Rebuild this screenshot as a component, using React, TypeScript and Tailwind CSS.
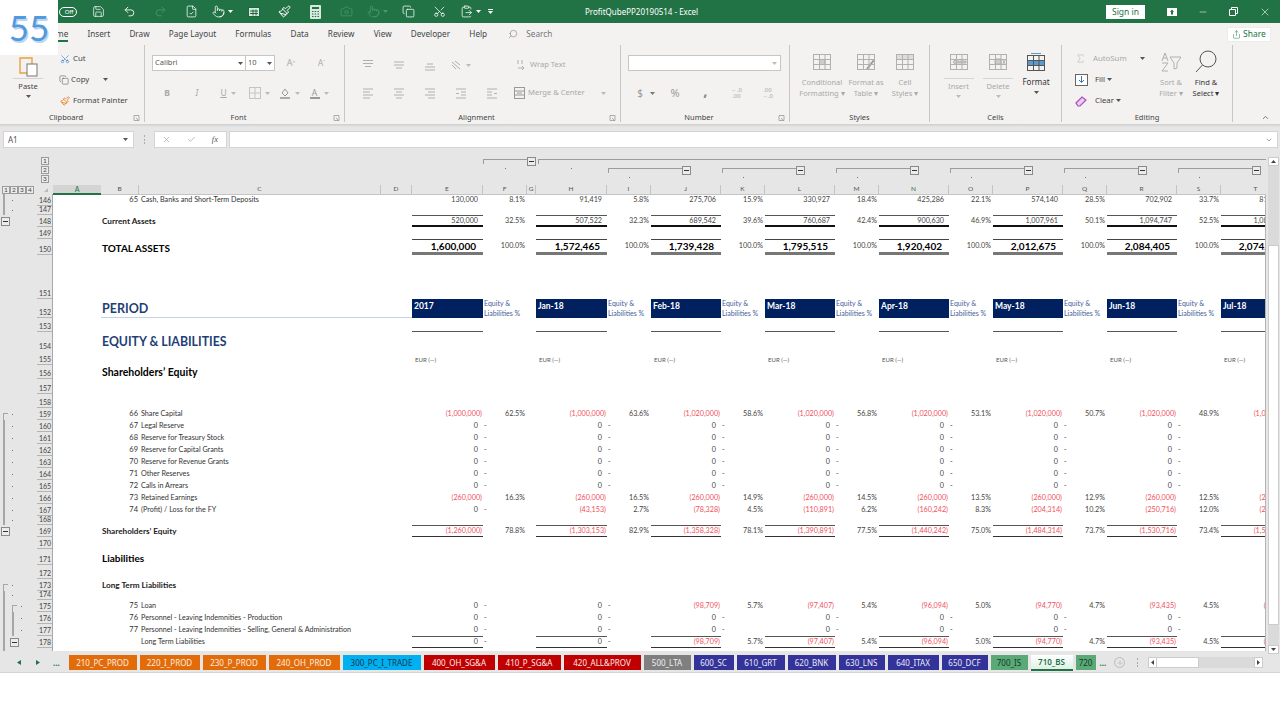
import React from 'react';
import { Save, Undo2, Redo2, Scissors, Camera, Pointer, Paintbrush, Copy, ClipboardPaste, FileCheck, Minus, X, Check, ChevronDown, ChevronUp, Plus, Search, Sigma, Share } from 'lucide-react';

const sheetCols = 'grid w-[1335px] grid-cols-[53px_48px_38px_242px_31px_71px_44px_9px_71px_44px_70px_44px_70px_44px_70px_44px_70px_44px_70px_44px_70px_44px]';

const off = '#b0b0b0';

const Caret = ({ c = '#555', className = '' }: { c?: string; className?: string }) => (
  <svg width="5" height="3" viewBox="0 0 5 3" className={className}><path d="M0 0h5L2.5 3z" fill={c} /></svg>
);

const Grid = ({ c = off, fill }: { c?: string; fill?: React.ReactNode }) => (
  <svg width="18" height="16" viewBox="0 0 18 16" fill="none" stroke={c} strokeWidth="1">
    {fill}
    <rect x=".5" y=".5" width="17" height="15" />
    <path d="M.5 5.5h17M.5 10.5h17M6.5.5v15M12 .5v15" />
  </svg>
);

const Lines = ({ d }: { d: string }) => (
  <svg width="12" height="12" viewBox="0 0 12 12" fill="none" stroke={off} strokeWidth="1"><path d={d} /></svg>
);

const Boxed = ({ t }: { t: string }) => (
  <div className="w-[8px] h-[8px] border border-[#9a9a9a] bg-[#ececec] flex items-center justify-center text-[6.5px] leading-none text-[#444]">{t}</div>
);

const MinusBox = () => (
  <div className="w-[9px] h-[9px] shrink-0 border border-[#8a8a8a] bg-[#ececec] flex items-center justify-center">
    <div className="w-[5px] h-[1px] bg-[#333]" />
  </div>
);

function Group({ w, label, launcher = true, children }: { w: string; label: string; launcher?: boolean; children: React.ReactNode }) {
  return (
    <div className={`${w} h-[79px] shrink-0 flex`}>
      <div className="flex-1 min-w-0 flex flex-col">
        <div className="flex-1 min-h-0">{children}</div>
        <div className="h-[12px] flex items-center">
          <div className="flex-1 text-center text-[7.5px] leading-none text-[#444]">{label}</div>
          {launcher && (
            <svg width="12" height="7" viewBox="0 0 12 7" fill="none" stroke="#999" strokeWidth=".8"><path d="M2 .5h5v5M2 .5v5h5M4 3l3 3" /></svg>
          )}
        </div>
      </div>
      <div className="w-[1px] h-[77px] bg-[#c8c6c4]" />
    </div>
  );
}

function BigBtn({ w, icon, lines, dark, rule }: { w: string; icon: React.ReactNode; lines: string[]; dark?: boolean; rule?: boolean }) {
  const color = dark ? 'text-[#333]' : 'text-[#a8a8a8]';
  return (
    <div className={`${w} flex flex-col items-center`}>
      <div className="h-[30px] flex items-center justify-center">{icon}</div>
      {rule ? (
        <>
          <div className="w-[30px] h-[1px] mt-[1px] bg-[#d4d4d4]" />
          <div className={`text-[7.5px] leading-[14px] ${color}`}>{lines[0]}</div>
          <Caret c={dark ? '#555' : '#bbb'} className="mt-[2px]" />
        </>
      ) : (
        lines.map((l) => (
          <div key={l} className={`text-[7.5px] leading-[10.5px] whitespace-nowrap ${color}`}>{l}</div>
        ))
      )}
    </div>
  );
}

const Cell = ({ w, children }: { w: string; children?: React.ReactNode }) => (
  <div className={`${w} shrink-0 flex items-center justify-center gap-[4px]`}>{children}</div>
);

function TitleBar() {
  const dim = '#4d9a70';
  const ic = 'w-[31px] flex items-center justify-center shrink-0';
  return (
    <div className="h-[23px] bg-[#217346] flex items-center text-white">
      <div className="w-[585px] shrink-0 flex items-center pl-[52px]">
        <div className={ic}>
          <div className="w-[18px] h-[10px] rounded-full border border-white text-[6px] leading-[8px] text-right pr-[2px]">Off</div>
        </div>
        <div className={ic}><Save size={13} strokeWidth={1.3} /></div>
        <div className={ic}><Undo2 size={13} strokeWidth={1.6} /></div>
        <div className={ic}><Redo2 size={13} strokeWidth={1.4} color={dim} /></div>
        <div className={ic}><FileCheck size={13} strokeWidth={1.4} /></div>
        <div className={ic}><Pointer size={13} strokeWidth={1.4} /><Caret c="#fff" className="ml-[3px]" /></div>
        <div className={ic}>
          <svg width="12" height="12" viewBox="0 0 12 12" fill="#d9e9df" stroke="#1d6a40"><rect x=".5" y="1.5" width="11" height="9" /><path d="M2 5h8M2 7.5h8M5 3.5v6M8 3.5v6" /></svg>
        </div>
        <div className={ic}><Paintbrush size={13} strokeWidth={1.8} /></div>
        <div className={ic}>
          <svg width="11" height="14" viewBox="0 0 11 14"><rect width="11" height="14" rx="1" fill="#d9e9df" /><path d="M2 2h7v2H2zM2 6h1.500v1H2zM4.700 6h1.500v1H4.700zM7.500 6H9v1H7.500zM2 8.500h1.500v1H2zM4.700 8.500h1.500v1H4.700zM7.500 8.500H9v1H7.500zM2 11h1.500v1H2zM4.700 11h1.500v1H4.700zM7.500 11H9v1H7.500z" fill="#217346" /></svg>
        </div>
        <div className={ic}><Camera size={13} strokeWidth={1.3} color={dim} /></div>
        <div className={ic}><Pointer size={13} strokeWidth={1.4} color={dim} /><Caret c={dim} className="ml-[3px]" /></div>
        <div className={ic}><Copy size={13} strokeWidth={1.4} /></div>
        <div className={ic}><Scissors size={13} strokeWidth={1.4} className="rotate-[-90deg]" /></div>
        <div className={ic}><ClipboardPaste size={13} strokeWidth={1.4} /><Caret c="#fff" className="ml-[3px]" /></div>
        <div className="flex flex-col items-center gap-[1px] ml-[2px]"><div className="w-[5px] h-[1px] bg-white" /><Caret c="#fff" /></div>
      </div>
      <div className="text-[8px] leading-none whitespace-nowrap">ProfitQubePP20190514  -  Excel</div>
      <div className="ml-auto flex items-center">
        <div className="w-[39px] h-[14px] bg-white text-[#217346] text-[8.5px] leading-[14px] text-center mr-[11px]">Sign in</div>
        <div className="w-[31px] flex justify-center">
          <svg width="10" height="8" viewBox="0 0 10 8"><rect width="10" height="8" fill="#fff" /><path d="M5 1.500L7 4H6v2.500H4V4H3z" fill="#217346" /></svg>
        </div>
        <div className="w-[31px] flex justify-center"><Minus size={10} strokeWidth={1.3} /></div>
        <div className="w-[31px] flex justify-center">
          <svg width="9" height="9" viewBox="0 0 9 9" fill="none" stroke="#fff"><path d="M2.500 2.500V.5h6v6h-2M.5 2.500h6v6h-6z" /></svg>
        </div>
        <div className="w-[31px] flex justify-center"><X size={12} strokeWidth={1.2} /></div>
      </div>
    </div>
  );
}

function TabStrip() {
  const tabs = ['Insert', 'Draw', 'Page Layout', 'Formulas', 'Data', 'Review', 'View', 'Developer', 'Help'];
  return (
    <div className="h-[22px] bg-[#f3f2f1] flex items-center text-[8.2px] text-[#444] pl-[45px] gap-[19.2px]">
      <div className="relative leading-[22px]">
        Home
        <div className="absolute left-0 right-0 bottom-[3px] h-[2px] bg-[#217346]" />
      </div>
      {tabs.map((t) => <div key={t} className="whitespace-nowrap">{t}</div>)}
      <div className="flex items-center gap-[8px] ml-[2px] text-[#777]">
        <Search size={10} strokeWidth={1.3} className="scale-x-[-1]" />
        <span>Search</span>
      </div>
      <div className="ml-auto mr-[9px] w-[44px] h-[15px] bg-white flex items-center justify-center gap-[2px] text-[#217346] border border-[#ececec] text-[8.5px]">
        <Share size={9} strokeWidth={1.3} />
        <span>Share</span>
      </div>
    </div>
  );
}

function Ribbon() {
  return (
    <div className="h-[79px] bg-[#f3f2f1] flex text-[#444] text-[7.8px]">
      <Group w="w-[145px]" label="Clipboard">
        <div className="flex">
          <div className="w-[56px] pl-[11px] pt-[2px]">
            <div className="w-[34px] flex flex-col items-center">
              <div className="h-[30px] flex items-end">
                <svg width="20" height="22" viewBox="0 0 20 22" fill="none">
                  <path d="M2 3h12v15H2z" fill="#f3f2f1" stroke="#e8a33d" strokeWidth="1.4" />
                  <rect x="9" y="9" width="10" height="12" fill="#fff" stroke="#777" />
                </svg>
              </div>
              <div className="w-[30px] h-[1px] mt-[1px] bg-[#d4d4d4]" />
              <div className="text-[7.5px] leading-[14px]">Paste</div>
              <Caret className="mt-[2px]" />
            </div>
          </div>
          <div className="pt-[3px]">
            <div className="h-[21px] flex items-center">
              <div className="w-[17px] flex justify-center"><Scissors size={10} color="#2b79c2" strokeWidth={1.4} className="rotate-[-90deg]" /></div>
              <span>Cut</span>
            </div>
            <div className="h-[21px] flex items-center">
              <div className="w-[15px] flex justify-center"><Copy size={10} color="#555" strokeWidth={1.3} /></div>
              <span>Copy</span>
              <Caret className="ml-[14px]" />
            </div>
            <div className="h-[21px] flex items-center">
              <div className="w-[17px] flex justify-center"><Paintbrush size={10} color="#e67e22" strokeWidth={2} /></div>
              <span className="whitespace-nowrap">Format Painter</span>
            </div>
          </div>
        </div>
      </Group>

      <Group w="w-[200px]" label="Font">
        <div className="pl-[7px] pt-[10px]">
          <div className="flex items-center h-[16px]">
            <div className="w-[94px] h-[16px] bg-white border border-[#c8c6c4] flex items-center justify-between px-[2px] text-[#555]">
              <span className="text-[7.5px]">Calibri</span><Caret />
            </div>
            <div className="w-[29px] h-[16px] bg-white border border-l-0 border-[#c8c6c4] flex items-center justify-between px-[2px] text-[#555]">
              <span className="text-[7.5px]">10</span><Caret />
            </div>
            <div className="w-[31px] text-center text-[9px] text-[#aaa] pl-[1px]">A<sup className="text-[5px]">^</sup></div>
            <div className="w-[31px] text-center text-[8px] text-[#aaa]">A<sup className="text-[5px]">ˇ</sup></div>
          </div>
          <div className="flex items-center h-[16px] mt-[14px] text-[#a8a8a8] text-[8.5px]">
            <Cell w="w-[30px]"><span className="font-bold">B</span></Cell>
            <Cell w="w-[30px]"><span className="italic">I</span></Cell>
            <Cell w="w-[32px]"><span className="underline">U</span><Caret c="#bbb" /></Cell>
            <Cell w="w-[30px]">
              <svg width="12" height="12" viewBox="0 0 12 12" fill="none" stroke="#c4c4c4"><rect x=".5" y=".5" width="11" height="11" /><path d="M.5 6h11M6 .5v11" /></svg>
              <Caret c="#bbb" />
            </Cell>
            <Cell w="w-[30px]">
              <svg width="12" height="12" viewBox="0 0 12 12" fill="none" stroke="#999"><path d="M3 6l3-4 3 4-3 3z" /><path d="M1 11h10" strokeWidth="1.6" /></svg>
              <Caret c="#bbb" />
            </Cell>
            <Cell w="w-[30px]">
              <div className="flex flex-col items-center text-[#999] leading-[9px]"><span>A</span><div className="w-[10px] h-[2px] bg-[#999]" /></div>
              <Caret c="#bbb" />
            </Cell>
          </div>
        </div>
      </Group>

      <Group w="w-[276px]" label="Alignment">
        <div className="pl-[7px] pt-[13px]">
          <div className="flex items-center h-[14px]">
            <Cell w="w-[31px]"><Lines d="M1 1.500h10M1 4.500h10M3 7.500h6" /></Cell>
            <Cell w="w-[31px]"><Lines d="M1 3h10M1 6h10M3 9h6" /></Cell>
            <Cell w="w-[31px]"><Lines d="M3 5h6M1 8h10M1 11h10" /></Cell>
            <Cell w="w-[31px]">
              <svg width="11" height="11" viewBox="0 0 11 11" fill="none" stroke={off}><path d="M1 2l8 7M1 5l4 4M4 1l5 4" /></svg>
              <Caret c="#bbb" />
            </Cell>
            <div className="flex items-center ml-[41px] gap-[3px] text-[#a8a8a8]">
              <svg width="10" height="12" viewBox="0 0 10 12" fill="none" stroke={off}><path d="M1 1v4M5 1v4M1 9h6l-2-2M5 11l2-2" /></svg>
              <span className="text-[7.6px] whitespace-nowrap">Wrap Text</span>
            </div>
          </div>
          <div className="flex items-center h-[14px] mt-[14px]">
            <Cell w="w-[31px]"><Lines d="M1 2h10M1 5h7M1 8h10M1 11h7" /></Cell>
            <Cell w="w-[31px]"><Lines d="M1 2h10M3 5h6M1 8h10M3 11h6" /></Cell>
            <Cell w="w-[31px]"><Lines d="M1 2h10M4 5h7M1 8h10M4 11h7" /></Cell>
            <Cell w="w-[31px]"><Lines d="M1 2h10M6 5h5M6 8h5M1 11h10M1 6.500h3" /></Cell>
            <Cell w="w-[31px]"><Lines d="M1 2h10M1 5h5M1 8h5M1 11h10M8 6.500h3" /></Cell>
            <div className="flex items-center ml-[7px] gap-[3px] text-[#a8a8a8]">
              <svg width="11" height="12" viewBox="0 0 11 12" fill="none" stroke="#999"><rect x=".5" y=".5" width="10" height="11" /><path d="M.5 4h10M.5 8h10M3 6h5" /></svg>
              <span className="text-[7.6px] whitespace-nowrap">Merge &amp; Center</span>
              <Caret c="#bbb" className="ml-[13px]" />
            </div>
          </div>
        </div>
      </Group>

      <Group w="w-[169px]" label="Number">
        <div className="pl-[7px] pt-[10px]">
          <div className="w-[153px] h-[16px] bg-white border border-[#c8c6c4] flex items-center justify-end pr-[3px]"><Caret c="#bbb" /></div>
          <div className="flex items-center h-[16px] mt-[14px] text-[#999]">
            <Cell w="w-[32px]"><span className="text-[10px] pl-[4px]">$</span><Caret c="#777" className="ml-[3px]" /></Cell>
            <Cell w="w-[30px]"><span className="text-[11px]">%</span></Cell>
            <Cell w="w-[31px]"><span className="text-[15px] font-bold leading-[10px] -mt-[7px] text-[#888]">,</span></Cell>
            <Cell w="w-[31px]"><span className="text-[6px] leading-[6px] text-[#aaa] text-center">←.0<br />.00</span></Cell>
            <Cell w="w-[31px]"><span className="text-[6px] leading-[6px] text-[#aaa] text-center">.00<br />→.0</span></Cell>
          </div>
        </div>
      </Group>

      <Group w="w-[140px]" label="Styles" launcher={false}>
        <div className="flex pl-[9px] pt-[2px]">
          <BigBtn w="w-[46px]" lines={['Conditional', 'Formatting ▾']} icon={<Grid fill={<path d="M6.500 5.500h5.500v5H6.500z" fill="#ccc" />} />} />
          <BigBtn w="w-[42px]" lines={['Format as', 'Table ▾']} icon={<Grid fill={<path d="M10 15l7-9" stroke="#999" strokeWidth="2" />} />} />
          <BigBtn w="w-[36px]" lines={['Cell', 'Styles ▾']} icon={<Grid fill={<path d="M.5.500h17v5H.5z" fill="#ddd" />} />} />
        </div>
      </Group>

      <Group w="w-[132px]" label="Cells" launcher={false}>
        <div className="flex pl-[9px] pt-[2px]">
          <BigBtn w="w-[39px]" rule lines={['Insert']} icon={<Grid fill={<path d="M3 8l3-3v2h10v2H6v2z" fill="#ccc" />} />} />
          <BigBtn w="w-[40px]" rule lines={['Delete']} icon={<Grid fill={<path d="M6 5h6v5H6zM13 5l4 6M17 5l-4 6" fill="#ccc" />} />} />
          <div className="w-[36px] flex flex-col items-center">
            <div className="h-[30px] flex flex-col items-center justify-center">
              <div className="w-[10px] h-[1px] bg-[#5b9bd5] mb-[1px]" />
              <Grid c="#555" fill={<path d="M.5 5.500h17v5H.5z" fill="#5b9bd5" />} />
            </div>
            <div className="text-[8px] leading-[10.5px] text-[#333]">Format</div>
            <Caret className="mt-[3px]" />
          </div>
        </div>
      </Group>

      <Group w="w-[171px]" label="Editing" launcher={false}>
        <div className="flex">
          <div className="w-[92px] pl-[13px] pt-[3px]">
            <div className="h-[21px] flex items-center text-[#a8a8a8]">
              <div className="w-[18px]"><Sigma size={11} color={off} strokeWidth={1.2} /></div>
              <span>AutoSum</span>
              <Caret className="ml-[13px]" />
            </div>
            <div className="h-[21px] flex items-center">
              <div className="w-[20px]">
                <svg width="13" height="12" viewBox="0 0 13 12" fill="none"><rect x=".5" y=".5" width="12" height="11" fill="#fff" stroke="#666" /><path d="M6.500 2v6M4 6l2.500 2.500L9 6" stroke="#2b79c2" /></svg>
              </div>
              <span>Fill</span>
              <Caret className="ml-[2px]" />
            </div>
            <div className="h-[21px] flex items-center">
              <div className="w-[20px]">
                <svg width="12" height="12" viewBox="0 0 12 12" fill="none" stroke="#a94fc0" strokeWidth="1.2"><path d="M1 8l6-6 4 3-6 6H3z" fill="#e9cdf1" /></svg>
              </div>
              <span>Clear</span>
              <Caret className="ml-[2px]" />
            </div>
          </div>
          <div className="pt-[2px]">
            <BigBtn w="w-[34px]" lines={['Sort &', 'Filter ▾']} icon={
              <svg width="21" height="20" viewBox="0 0 21 20" fill="none" stroke={off}><path d="M1 9l3-8 3 8M2 6h4M1 11h6l-6 8h6M9 5h11l-4 6v5l-3 1v-6z" /></svg>
            } />
          </div>
          <div className="pt-[2px]">
            <BigBtn w="w-[36px]" dark lines={['Find &', 'Select ▾']} icon={
              <svg width="22" height="24" viewBox="0 0 22 24" fill="none" stroke="#555" strokeWidth="1"><circle cx="13" cy="9" r="8" /><path d="M7.500 15L1 22" /></svg>
            } />
          </div>
        </div>
      </Group>

      <div className="flex-1 flex items-end justify-end pr-[10px] pb-[2px]">
        <ChevronUp size={9} strokeWidth={2} color="#555" />
      </div>
    </div>
  );
}

function FormulaBar() {
  return (
    <div className="h-[22px] bg-[#e6e6e6] pt-[4px] flex items-start text-[#555]">
      <div className="ml-[3px] w-[131px] h-[17px] bg-white border border-[#d4d4d4] flex items-center justify-between pl-[4px] pr-[5px] text-[8px]">
        <span>A1</span><Caret />
      </div>
      <div className="w-[20px] h-[17px] flex flex-col items-center justify-center gap-[1.5px]">
        {[0, 1, 2].map((i) => <div key={i} className="w-[1px] h-[2px] bg-[#aaa]" />)}
      </div>
      <div className="w-[73px] h-[17px] bg-white border border-[#d4d4d4] flex items-center justify-between pl-[7px] pr-[8px]">
        <X size={9} color="#aaa" />
        <Check size={9} color="#aaa" />
        <span className="[font-family:'Liberation_Serif',serif] italic text-[8.5px]">fx</span>
      </div>
      <div className="ml-[2px] mr-[2px] flex-1 h-[17px] bg-white border border-[#d4d4d4] flex items-center justify-end pr-[4px]">
        <ChevronDown size={8} strokeWidth={2} color="#777" />
      </div>
    </div>
  );
}

const colNames = ['A', 'B', 'C', 'D', 'E', 'F', 'G', 'H', 'I', 'J', 'K', 'L', 'M', 'N', 'O', 'P', 'Q', 'R', 'S', 'T', 'U'];

function ColOutline() {
  const Line = ({ className = '' }: { className?: string }) => (
    <div className={`h-[5px] mt-[2px] border-t-[1.5px] border-l border-[#9c9c9c] ${className}`} />
  );
  const Dot = () => <div className="flex justify-center pt-[1px]"><div className="w-[1px] h-[1px] bg-[#777] mt-[1px]" /></div>;
  return (
    <div className="pt-[8px] h-[36px]">
      <div className={`${sheetCols} h-[9px]`}>
        <div className="flex justify-end pr-[4px]"><Boxed t="1" /></div>
        <div className="col-span-5" />
        <Line />
        <MinusBox />
        <div className="col-span-14"><Line className="ml-[2px]" /></div>
      </div>
      <div className={`${sheetCols} h-[9px]`}>
        <div className="flex justify-end pr-[4px]"><Boxed t="2" /></div>
        <div className="col-span-5" />
        <Dot />
        <div />
        <Dot />
        {[0, 1, 2, 3, 4, 5].map((i) => (
          <div key={i} className="col-span-2 flex items-start pl-[1px]">
            <Line className="flex-1" />
            <MinusBox />
            <div className="w-[30px] shrink-0" />
          </div>
        ))}
      </div>
      <div className={`${sheetCols} h-[9px]`}>
        <div className="flex justify-end pr-[4px]"><Boxed t="3" /></div>
        <div className="col-span-8" />
        {[0, 1, 2, 3, 4, 5].map((i) => (
          <React.Fragment key={i}><Dot /><div /></React.Fragment>
        ))}
      </div>
    </div>
  );
}

function ColHeader() {
  return (
    <div className={`${sheetCols} h-[9px]`}>
      <div className="flex items-center pl-[2px] gap-0">
        {['1', '2', '3', '4'].map((t) => <Boxed key={t} t={t} />)}
        <svg width="4" height="4" viewBox="0 0 4 4" className="ml-[10px]"><path d="M4 0v4H0z" fill="#bbb" /></svg>
      </div>
      {colNames.map((c, i) => (
        <div
          key={c}
          className={
            i === 0
              ? 'bg-[#d4d4d4] border-b-2 border-[#217346] text-[#217346] text-center text-[7px] leading-[8px]'
              : 'border-b border-r border-[#c4c4c4] text-center text-[6.5px] leading-[8px] text-[#555]'
          }
        >
          {c}
        </div>
      ))}
    </div>
  );
}

type Mark = 'line' | 'start' | 'dot' | 'box' | '';
type Period = [string, string];

interface Row {
  n: number;
  h: string;
  marks?: Mark[];
  no?: string;
  item?: string;
  title?: string;
  titleCls?: string;
  vals?: Period[];
  line?: string;
  big?: boolean;
  kind?: 'head' | 'rule' | 'eur';
}

const OutlineMark = ({ m }: { m: Mark }) => {
  if (m === 'line') return <div className="w-[9px] h-full pl-[3px]"><div className="w-[1.5px] h-full bg-[#a6a6a6]" /></div>;
  if (m === 'start') return (
    <div className="w-[9px] h-full pl-[3px] pt-[5px]"><div className="w-[5px] h-full border-l-[1.5px] border-t border-[#a6a6a6]" /></div>
  );
  if (m === 'dot') return <div className="w-[9px] h-full pl-[3px] flex items-center"><div className="w-[1px] h-[1px] bg-[#777]" /></div>;
  if (m === 'box') return <div className="w-[9px] h-full pl-[1px] flex items-center"><MinusBox /></div>;
  return <div className="w-[9px] h-full" />;
};

const subLine = 'border-t border-t-[#555] border-b-2 border-b-[#111]';
const eqLine = 'border-t border-t-[#555] border-b border-b-[#333]';

function ValueCell({ v, r }: { v: string; r: Row }) {
  if (r.kind === 'head') {
    return <div className="bg-[#002060] text-white font-bold text-[8.5px] leading-[14px] pl-[2px] whitespace-nowrap">{v}</div>;
  }
  if (r.kind === 'rule') return <div className="border-b border-[#555]" />;
  if (r.kind === 'eur') return <div className="pl-[3px] text-[6px] leading-[11px] text-[#555] flex items-end whitespace-nowrap">{v}</div>;
  const red = v.startsWith('(');
  const color = red ? 'text-[#f0505a] pr-[1px]' : 'text-[#444] pr-[5px]';
  const size = r.big
    ? 'text-[10px] font-bold text-black leading-[12px] pr-[7px]'
    : r.line === subLine
      ? `text-[7.2px] leading-[8px] ${color}`
      : r.line
        ? `text-[7.2px] leading-[10px] ${color}`
        : `text-[7.2px] leading-[10px] pb-[1.5px] ${color}`;
  return <div className={`${r.line || ''} ${size} flex items-end justify-end whitespace-nowrap`}>{v}</div>;
}

function PctCell({ p, r }: { p: string; r: Row }) {
  if (r.kind === 'head') {
    return <div className="pl-[1px] text-[7px] leading-[9.5px] text-[#44609a] whitespace-nowrap flex items-end"><span>Equity &amp;<br />Liabilities %</span></div>;
  }
  if (!p) return <div />;
  if (p === '-') return <div className="text-[7.2px] text-[#444] leading-[10px] pb-[1.5px] pl-[1px] flex items-end">-</div>;
  return <div className={`text-[7.2px] text-[#444] leading-[10px] pr-[2px] flex items-end justify-end ${r.big ? 'pb-[4px]' : 'pb-[1.5px]'}`}>{p}</div>;
}

const zeros: Period[] = Array(8).fill(['0', '-']);
const make = (v: string[], p: string[]): Period[] => v.map((x, i) => [x, p[i]]);
const blank = (v: string): Period[] => Array(8).fill([v, '']);

const heads = ['2017', 'Jan-18', 'Feb-18', 'Mar-18', 'Apr-18', 'May-18', 'Jun-18', 'Jul-18'];
const L = (a: Mark, b: Mark = '', c: Mark = ''): Mark[] => [a, b, c];
const items = (n: number, no: string, item: string, vals: Period[] = zeros): Row => ({ n, h: 'h-[12px]', marks: L('line', 'dot'), no, item, vals });

const smallBold = 'text-[8.2px] leading-[11px] font-bold text-[#222]';
const h2 = 'text-[10.5px] leading-[14px] font-bold text-black';

const loan = make(['0', '0', '(98,709)', '(97,407)', '(96,094)', '(94,770)', '(93,435)', '(92,088)'], ['-', '-', '5.7%', '5.4%', '5.0%', '4.7%', '4.5%', '4.4%']);

const rows: Row[] = [
  { ...items(146, '65', 'Cash, Banks and Short-Term Deposits', make(['130,000', '91,419', '275,706', '330,927', '425,286', '574,140', '702,902', '811,274'], ['8.1%', '5.8%', '15.9%', '18.4%', '22.1%', '28.5%', '33.7%', '39.1%'])) },
  { n: 147, h: 'h-[9px]', marks: L('line', 'dot') },
  { n: 148, h: 'h-[12px]', marks: L('box'), title: 'Current Assets', titleCls: smallBold, line: subLine, vals: make(['520,000', '507,522', '689,542', '760,687', '900,630', '1,007,961', '1,094,747', '1,080,412'], ['32.5%', '32.3%', '39.6%', '42.4%', '46.9%', '50.1%', '52.5%', '52.1%']) },
  { n: 149, h: 'h-[12px]' },
  { n: 150, h: 'h-[16px]', big: true, title: 'TOTAL ASSETS', titleCls: 'text-[10px] leading-[14px] font-bold text-black', line: 'border-t border-t-[#444] border-b-[3px] border-b-[#777]', vals: make(['1,600,000', '1,572,465', '1,739,428', '1,795,515', '1,920,402', '2,012,675', '2,084,405', '2,074,086'], Array(8).fill('100.0%')) },
  { n: 151, h: 'h-[44px]' },
  { n: 152, h: 'h-[19px]', kind: 'head', title: 'PERIOD', titleCls: 'text-[12.5px] leading-[16px] font-bold text-[#1f3f77] border-b border-[#c5d3e8]', vals: heads.map((d): Period => [d, '']) },
  { n: 153, h: 'h-[14px]', kind: 'rule', vals: blank('') },
  { n: 154, h: 'h-[19px]', title: 'EQUITY & LIABILITIES', titleCls: 'text-[12.3px] leading-[19px] font-bold text-[#1f3f77] pb-[1px]' },
  { n: 155, h: 'h-[14px]', kind: 'eur', vals: blank('EUR (—)') },
  { n: 156, h: 'h-[14px]', title: 'Shareholders’ Equity', titleCls: h2 },
  { n: 157, h: 'h-[15px]' },
  { n: 158, h: 'h-[14px]' },
  { ...items(159, '66', 'Share Capital', make(['(1,000,000)', '(1,000,000)', '(1,020,000)', '(1,020,000)', '(1,020,000)', '(1,020,000)', '(1,020,000)', '(1,020,000)'], ['62.5%', '63.6%', '58.6%', '56.8%', '53.1%', '50.7%', '48.9%', '49.2%'])), marks: L('start', 'dot') },
  items(160, '67', 'Legal Reserve'),
  items(161, '68', 'Reserve for Treasury Stock'),
  items(162, '69', 'Reserve for Capital Grants'),
  items(163, '70', 'Reserve for Revenue Grants'),
  items(164, '71', 'Other Reserves'),
  items(165, '72', 'Calls in Arrears'),
  items(166, '73', 'Retained Earnings', make(['(260,000)', '(260,000)', '(260,000)', '(260,000)', '(260,000)', '(260,000)', '(260,000)', '(260,000)'], ['16.3%', '16.5%', '14.9%', '14.5%', '13.5%', '12.9%', '12.5%', '12.5%'])),
  items(167, '74', '(Profit) / Loss for the FY', make(['0', '(43,153)', '(78,328)', '(110,891)', '(160,242)', '(204,314)', '(250,716)', '(238,000)'], ['-', '2.7%', '4.5%', '6.2%', '8.3%', '10.2%', '12.0%', '11.5%'])),
  { n: 168, h: 'h-[9px]', marks: L('line', 'dot') },
  { n: 169, h: 'h-[12px]', marks: L('box'), title: 'Shareholders’ Equity', titleCls: smallBold, line: eqLine, vals: make(['(1,260,000)', '(1,303,153)', '(1,358,328)', '(1,390,891)', '(1,440,242)', '(1,484,314)', '(1,530,716)', '(1,518,000)'], ['78.8%', '82.9%', '78.1%', '77.5%', '75.0%', '73.7%', '73.4%', '73.2%']) },
  { n: 170, h: 'h-[12px]' },
  { n: 171, h: 'h-[16px]', title: 'Liabilities', titleCls: 'text-[10px] leading-[14px] font-bold text-black' },
  { n: 172, h: 'h-[14px]' },
  { n: 173, h: 'h-[12px]', marks: L('start', 'dot'), title: 'Long Term Liabilities', titleCls: smallBold },
  { n: 174, h: 'h-[9px]', marks: L('line', 'dot') },
  { n: 175, h: 'h-[12px]', marks: L('line', 'start', 'dot'), no: '75', item: 'Loan', vals: loan },
  { n: 176, h: 'h-[12px]', marks: L('line', 'line', 'dot'), no: '76', item: 'Personnel - Leaving Indemnities - Production', vals: zeros },
  { n: 177, h: 'h-[12px]', marks: L('line', 'line', 'dot'), no: '77', item: 'Personnel - Leaving Indemnities - Selling, General & Administration', vals: zeros },
  { n: 178, h: 'h-[12px]', marks: L('line', 'box'), item: 'Long Term Liabilities', line: eqLine, vals: loan },
  { n: 179, h: 'h-[12px]', marks: L('line') },
];

function SheetRow({ r }: { r: Row }) {
  return (
    <div className={`${sheetCols} ${r.h}`}>
      <div className="bg-[#e6e6e6] border-r border-[#a8a8a8] flex h-full min-h-0 overflow-hidden">
        <div className="w-[37px] flex h-full">
          {(r.marks || []).map((m, i) => <OutlineMark key={i} m={m} />)}
        </div>
        <div className="w-[15px] border-b border-[#b4b4b4] text-[7px] leading-[9px] text-[#444] flex items-end justify-center pl-[1px]">{r.n}</div>
      </div>
      <div />
      {r.title ? (
        <div className={`col-span-3 pl-[1px] whitespace-nowrap flex items-end ${r.titleCls}`}>{r.title}</div>
      ) : (
        <>
          <div className="text-[7.5px] leading-[10px] pb-[1px] text-[#333] text-right pr-[1px] flex items-end justify-end">{r.no}</div>
          <div className="text-[7.2px] leading-[10px] pb-[1.5px] text-[#333] pl-[2px] whitespace-nowrap flex items-end">{r.item}</div>
          <div />
        </>
      )}
      {r.vals?.map(([v, p], i) => (
        <React.Fragment key={i}>
          <ValueCell v={v} r={r} />
          <PctCell p={p} r={r} />
          {i === 0 && <div />}
        </React.Fragment>
      ))}
    </div>
  );
}

const sheetTabs = [
  { t: '210_PC_PROD', c: 'w-[68px] bg-[#e36c0a] text-[#fdeee0]' },
  { t: '220_I_PROD', c: 'w-[60px] bg-[#e36c0a] text-[#fdeee0]' },
  { t: '230_P_PROD', c: 'w-[63px] bg-[#e36c0a] text-[#fdeee0]' },
  { t: '240_OH_PROD', c: 'w-[71px] bg-[#e36c0a] text-[#fdeee0]' },
  { t: '300_PC_I_TRADE', c: 'w-[78px] bg-[#00b0f0] text-[#10374f]' },
  { t: '400_OH_SG&A', c: 'w-[71px] bg-[#c00000] text-[#fbeaea]' },
  { t: '410_P_SG&A', c: 'w-[63px] bg-[#c00000] text-[#fbeaea]' },
  { t: '420_ALL&PROV', c: 'w-[77px] bg-[#c00000] text-[#fbeaea]' },
  { t: '500_LTA', c: 'w-[47px] bg-[#7f7f7f] text-[#f0f0f0]' },
  { t: '600_SC', c: 'w-[40px] bg-[#333399] text-[#eaeaf8]' },
  { t: '610_GRT', c: 'w-[48px] bg-[#333399] text-[#eaeaf8]' },
  { t: '620_BNK', c: 'w-[48px] bg-[#333399] text-[#eaeaf8]' },
  { t: '630_LNS', c: 'w-[46px] bg-[#333399] text-[#eaeaf8]' },
  { t: '640_ITAX', c: 'w-[51px] bg-[#333399] text-[#eaeaf8]' },
  { t: '650_DCF', c: 'w-[46px] bg-[#333399] text-[#eaeaf8]' },
  { t: '700_IS', c: 'w-[37px] bg-[#5aa977] text-[#123a22]' },
];

function SheetTabs() {
  return (
    <div className="h-[19px] bg-[#e6e6e6] border-b border-[#d4d4d4] flex items-start pt-[1px] text-[8px] text-center">
      <div className="w-[68.5px] h-[15px] flex items-center text-[#217346] shrink-0">
        <svg width="4" height="5" viewBox="0 0 4 5" className="ml-[17px]"><path d="M4 0v5L0 2.500z" fill="#217346" /></svg>
        <svg width="4" height="5" viewBox="0 0 4 5" className="ml-[15px]"><path d="M0 0v5l4-2.500z" fill="#217346" /></svg>
        <span className="ml-[13px] text-[8px] font-bold leading-[15px]">...</span>
      </div>
      <div className="flex gap-[3px]">
        {sheetTabs.map((s) => (
          <div key={s.t} className={`${s.c} h-[15px] leading-[15px] whitespace-nowrap overflow-hidden`}>{s.t}</div>
        ))}
        <div className="w-[42px] h-[16px] bg-gradient-to-b from-white to-[#dff0e6] border-b-2 border-[#217346] text-[#217346] font-semibold leading-[14px]">710_BS</div>
        <div className="w-[20px] h-[15px] bg-[#5aa977] text-[#123a22] leading-[15px] overflow-hidden">720</div>
      </div>
      <div className="h-[15px] flex items-center">
        <span className="ml-[4px] font-bold text-[#217346] leading-[15px]">...</span>
        <div className="ml-[8px] w-[11px] h-[11px] rounded-full border border-[#bbb] flex items-center justify-center">
          <Plus size={8} color="#bbb" strokeWidth={2} />
        </div>
        <div className="ml-[12px] flex flex-col gap-[1.5px]">
          {[0, 1, 2].map((i) => <div key={i} className="w-[1px] h-[2px] bg-[#aaa]" />)}
        </div>
        <div className="ml-[10px] flex items-center h-[11px]">
          <div className="w-[9px] h-[11px] bg-white border border-[#ccc] flex items-center justify-center">
            <svg width="3" height="5" viewBox="0 0 3 5"><path d="M3 0v5L0 2.500z" fill="#444" /></svg>
          </div>
          <div className="w-[42px] h-[11px] bg-white border-y border-r border-[#ccc]" />
          <div className="w-[55px] h-[11px] bg-[#dadada]" />
          <div className="w-[9px] h-[11px] bg-white border border-[#ccc] flex items-center justify-center">
            <svg width="3" height="5" viewBox="0 0 3 5"><path d="M0 0v5l3-2.500z" fill="#444" /></svg>
          </div>
        </div>
      </div>
    </div>
  );
}

function VScroll() {
  return (
    <div className="w-[14px] h-[505px] bg-[#e6e6e6] pt-[8px] pl-[2px] flex flex-col shrink-0">
      <div className="w-[11px] h-[9px] bg-white border border-[#ccc] flex items-center justify-center">
        <svg width="5" height="3" viewBox="0 0 5 3"><path d="M0 3h5L2.500 0z" fill="#444" /></svg>
      </div>
      <div className="w-[11px] h-[79px] bg-[#dadada]" />
      <div className="w-[11px] h-[380px] bg-white border border-[#ccc]" />
      <div className="w-[11px] h-[20px] bg-[#dadada]" />
      <div className="w-[11px] h-[9px] bg-white border border-[#ccc] flex items-center justify-center">
        <svg width="5" height="3" viewBox="0 0 5 3"><path d="M0 0h5L2.500 3z" fill="#444" /></svg>
      </div>
    </div>
  );
}

export default function App() {
  return (
    <div className="relative w-[1280px] h-[720px] overflow-hidden bg-white [font-family:'Noto_Sans',sans-serif]">
      <TitleBar />
      <TabStrip />
      <Ribbon />
      <div className="h-[3px] bg-gradient-to-b from-[#cfcfcf] to-[#e6e6e6]" />
      <FormulaBar />
      <div className="flex bg-[#e6e6e6]">
        <div className="w-[1266px] h-[505px] overflow-hidden [font-family:'Lato',sans-serif]">
          <ColOutline />
          <ColHeader />
          <div className="h-[457px] overflow-hidden bg-white border-r border-[#b4b4b4]">
            {rows.map((r) => <SheetRow key={r.n} r={r} />)}
          </div>
        </div>
        <VScroll />
      </div>
      <SheetTabs />
      <div className="absolute left-0 top-0 w-[58px] h-[55px] bg-white flex items-center justify-center">
        <span className="text-[35px] leading-none text-[#5299dd] [font-family:'Lato',sans-serif] [text-shadow:1.5px_1.5px_0_#bcd7f0]">55</span>
      </div>
    </div>
  );
}
